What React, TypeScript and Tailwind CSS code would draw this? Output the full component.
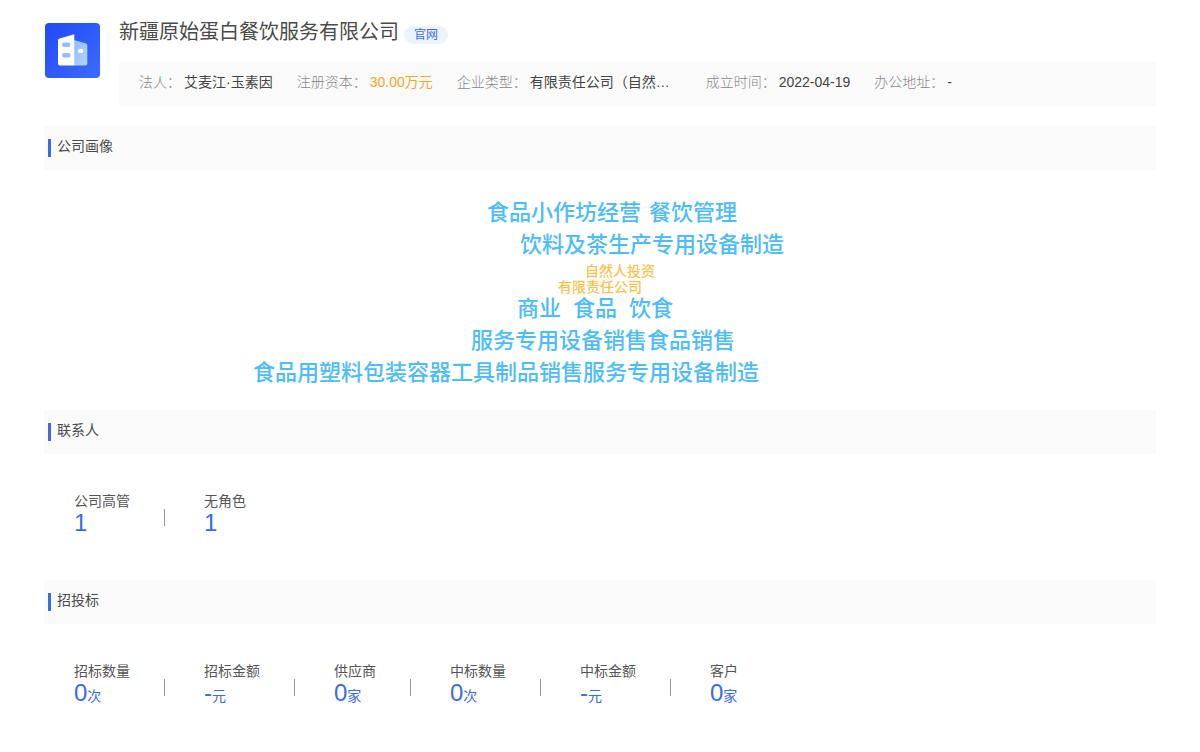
import type { ReactNode } from 'react';

interface Fact {
  label: string;
  value: string;
  highlight?: boolean;
  fixed?: boolean;
}

interface Stat {
  label: string;
  value: string;
  unit?: string;
}

interface CloudRow {
  words: string[];
  className: string;
}

const facts: Fact[] = [
  { label: '法人', value: '艾麦江·玉素因' },
  { label: '注册资本', value: '30.00万元', highlight: true },
  { label: '企业类型', value: '有限责任公司（自然…', fixed: true },
  { label: '成立时间', value: '2022-04-19' },
  { label: '办公地址', value: '-' },
];

const cloudRows: CloudRow[] = [
  { words: ['食品小作坊经营', '餐饮管理'], className: 'ml-[234px] gap-2 text-[22px] leading-8 text-[#4dbcf8]' },
  { words: ['饮料及茶生产专用设备制造'], className: 'ml-[267px] text-[22px] leading-8 text-[#4dbcf8]' },
  { words: ['自然人投资'], className: 'ml-[332px] mt-0.5 text-sm leading-4 text-[#f9c24d]' },
  { words: ['有限责任公司'], className: 'ml-[305px] text-sm leading-4 text-[#f9c24d]' },
  { words: ['商业', '食品', '饮食'], className: 'ml-[264px] -mt-0.5 gap-3 text-[22px] leading-8 text-[#4dbcf8]' },
  { words: ['服务专用设备销售', '食品销售'], className: 'ml-[218px] text-[22px] leading-8 text-[#4dbcf8]' },
  { words: ['食品用塑料包装容器工具制品销售', '服务专用设备制造'], className: 'text-[22px] leading-8 text-[#4dbcf8]' },
];

const contactStats: Stat[] = [
  { label: '公司高管', value: '1' },
  { label: '无角色', value: '1' },
];

const bidStats: Stat[] = [
  { label: '招标数量', value: '0', unit: '次' },
  { label: '招标金额', value: '-', unit: '元' },
  { label: '供应商', value: '0', unit: '家' },
  { label: '中标数量', value: '0', unit: '次' },
  { label: '中标金额', value: '-', unit: '元' },
  { label: '客户', value: '0', unit: '家' },
];

function CompanyLogo() {
  return (
    <svg viewBox="0 0 56 56" className="size-14 shrink-0" aria-hidden="true">
      <defs>
        <linearGradient id="logo-bg" x1="0" y1="0" x2="1" y2="1">
          <stop offset="0" stopColor="#2348f5" />
          <stop offset="1" stopColor="#3a6cff" />
        </linearGradient>
        <linearGradient id="logo-side" x1="0" y1="0" x2="1" y2="1">
          <stop offset="0" stopColor="#8dbcff" />
          <stop offset="1" stopColor="#b4d5ff" />
        </linearGradient>
      </defs>
      <rect x="1" y="1" width="55" height="55" rx="4" fill="url(#logo-bg)" />
      <path d="M30 18 L41.5 21.2 Q43.3 21.8 43.3 23.5 V41.5 Q43.3 43.5 41.3 43.5 H30 Z" fill="url(#logo-side)" />
      <path d="M15.5 16.6 L30.3 12.3 V43.5 H16 Q14 43.5 14 41.5 V18.6 Q14 17 15.5 16.6 Z" fill="#fff" />
      <rect x="18" y="20.5" width="8.5" height="4.5" rx="2.2" fill="#94bdfa" />
      <rect x="18" y="31" width="8.5" height="4.5" rx="2.2" fill="#94bdfa" />
      <rect x="33.8" y="26.9" width="5.6" height="4" rx="2" fill="#fff" />
    </svg>
  );
}

function Section({ title, children }: { title: string; children: ReactNode }) {
  return (
    <section>
      <div className="flex h-11 items-center bg-[#fafafa] pl-1">
        <span className="h-[18px] w-[3px] bg-[#3a6be6]" />
        <h2 className="mb-1 ml-1.5 text-sm text-[#4a4a4a]">{title}</h2>
      </div>
      {children}
    </section>
  );
}

function StatList({ stats }: { stats: Stat[] }) {
  return (
    <dl className="flex px-[30px] pt-9 pb-[46px]">
      {stats.map((stat, index) => (
        <div key={stat.label} className="flex items-center">
          {index > 0 && <span className="mr-[39px] ml-[34px] mt-2.5 h-[17px] w-px bg-[#999]" />}
          <div>
            <dt className="text-sm leading-[22px] text-[#555]">{stat.label}</dt>
            <dd className="h-[22px] text-2xl leading-[22px] text-[#3a6be6]">
              {stat.value}
              {stat.unit && <span className="text-sm leading-[22px]">{stat.unit}</span>}
            </dd>
          </div>
        </div>
      ))}
    </dl>
  );
}

export default function App() {
  return (
    <main
      lang="zh-CN"
      className="min-h-screen bg-white px-11 pt-[22px] font-['Liberation_Sans','Noto_Sans_CJK_SC',sans-serif]"
    >
      <header className="mb-5 flex">
        <CompanyLogo />
        <div className="ml-[19px] min-w-0 flex-1">
          <div className="flex h-10 items-start">
            <h1 className="text-xl leading-5 text-[#4a4a4a]">新疆原始蛋白餐饮服务有限公司</h1>
            <a href="#" className="mt-1 ml-[5px] rounded-full bg-[#edf3fd] px-2.5 text-xs leading-[18px] text-[#3a6be6]">
              官网
            </a>
          </div>
          <dl className="flex h-11 items-center gap-6 bg-[#fafafa] px-5 pb-1 text-sm">
            {facts.map((fact) => (
              <div key={fact.label} className="flex">
                <dt className="font-light text-[#888]">{fact.label}：</dt>
                <dd
                  className={[
                    'ml-[3px] whitespace-nowrap',
                    fact.fixed ? 'w-[152px]' : '',
                    fact.highlight ? 'text-[#f5a623]' : 'text-[#444]',
                  ].join(' ')}
                >
                  {fact.value}
                </dd>
              </div>
            ))}
          </dl>
        </div>
      </header>

      <Section title="公司画像">
        <div className="mx-auto w-full max-w-[694px] pt-[27px] pb-[21px] font-medium">
          {cloudRows.map((row) => (
            <div key={row.words[0]} className={`flex whitespace-nowrap ${row.className}`}>
              {row.words.map((word) => (
                <span key={word}>{word}</span>
              ))}
            </div>
          ))}
        </div>
      </Section>

      <Section title="联系人">
        <StatList stats={contactStats} />
      </Section>

      <Section title="招投标">
        <StatList stats={bidStats} />
      </Section>
    </main>
  );
}
